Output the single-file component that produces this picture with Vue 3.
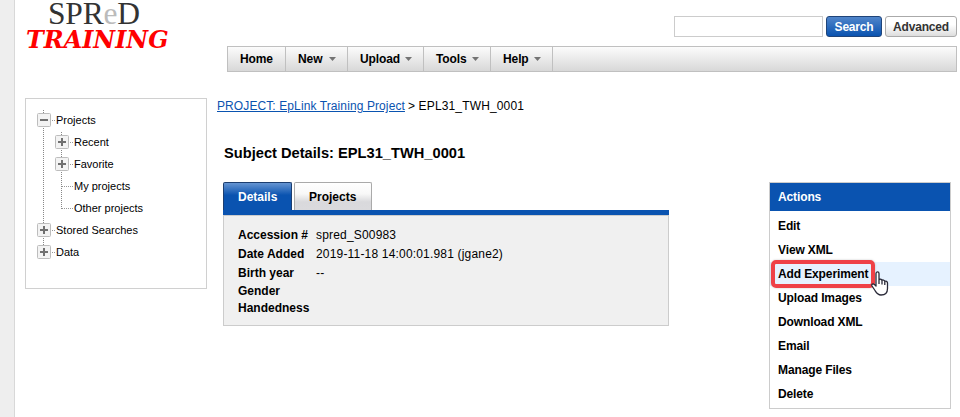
<script setup>
const menus = [
  { label: 'Home', w: 58 },
  { label: 'New', drop: true, w: 62 },
  { label: 'Upload', drop: true, w: 76 },
  { label: 'Tools', drop: true, w: 67 },
  { label: 'Help', drop: true, w: 62 },
]
const tree = [
  {
    label: 'Projects',
    open: true,
    children: [
      { label: 'Recent', expandable: true },
      { label: 'Favorite', expandable: true },
      { label: 'My projects' },
      { label: 'Other projects' },
    ],
  },
  { label: 'Stored Searches' },
  { label: 'Data' },
]
const details = [
  { label: 'Accession #', value: 'spred_S00983', h: 19 },
  { label: 'Date Added', value: '2019-11-18 14:00:01.981 (jgane2)', h: 19 },
  { label: 'Birth year', value: '--', h: 19 },
  { label: 'Gender', value: '', h: 17 },
  { label: 'Handedness', value: '', h: 17 },
]
const actions = ['Edit', 'View XML', 'Add Experiment', 'Upload Images', 'Download XML', 'Email', 'Manage Files', 'Delete']
</script>

<template>
  <div class="page">
    <div class="gutter"></div>
    <div class="main">
      <header class="header">
        <div class="logo">
          <div class="brand">SPR<span class="faint">e</span>D</div>
          <div class="training">TRAINING</div>
        </div>
        <div class="top">
          <div class="search">
            <input class="field" type="text" aria-label="Search" />
            <button class="btn primary">Search</button>
            <button class="btn">Advanced</button>
          </div>
          <nav class="nav">
            <div v-for="m in menus" :key="m.label" class="menu" :style="{ width: m.w + 'px' }">
              <span>{{ m.label }}</span>
              <svg v-if="m.drop" class="arrow" width="7" height="4" viewBox="0 0 7 4"><path d="M0 0H7L3.5 4Z" fill="#737373" /></svg>
            </div>
          </nav>
        </div>
      </header>
      <div class="body">
        <aside class="sidebar">
          <ul class="tree">
            <li v-for="n in tree" :key="n.label" class="node root">
              <div class="row">
                <svg class="toggle" width="14" height="14" viewBox="0 0 14 14">
                  <rect x=".5" y=".5" width="13" height="13" rx="1" fill="#f3f3f3" stroke="#bdbdbd" />
                  <path :d="n.open ? 'M3 7H11' : 'M3 7H11M7 3V11'" stroke="#707070" stroke-width="2" />
                </svg>
                <span class="link"></span>
                <span>{{ n.label }}</span>
              </div>
              <ul v-if="n.children" class="sub">
                <li v-for="c in n.children" :key="c.label" class="node">
                  <div class="row">
                    <template v-if="c.expandable">
                      <svg class="toggle" width="14" height="14" viewBox="0 0 14 14">
                        <rect x=".5" y=".5" width="13" height="13" rx="1" fill="#f3f3f3" stroke="#bdbdbd" />
                        <path d="M3 7H11M7 3V11" stroke="#707070" stroke-width="2" />
                      </svg>
                      <span class="link"></span>
                    </template>
                    <span v-else class="link long"></span>
                    <span>{{ c.label }}</span>
                  </div>
                </li>
              </ul>
            </li>
          </ul>
        </aside>
        <section class="content">
          <div class="crumbs"><a>PROJECT: EpLink Training Project</a><span class="here">&gt; EPL31_TWH_0001</span></div>
          <h1 class="title"><span>Subject Details: EPL31_TWH_0001</span></h1>
          <div class="tabs">
            <div class="tab active">Details</div>
            <div class="tab">Projects</div>
          </div>
          <div class="panel">
            <div class="details">
              <div v-for="d in details" :key="d.label" class="detail" :style="{ height: d.h + 'px' }">
                <b>{{ d.label }}</b><span>{{ d.value }}</span>
              </div>
            </div>
          </div>
        </section>
        <aside class="actions">
          <div class="ahead">Actions</div>
          <div class="alist">
            <div v-for="a in actions" :key="a" class="action" :class="{ hover: a === 'Add Experiment' }">
              {{ a }}
              <template v-if="a === 'Add Experiment'">
                <span class="mark"></span>
                <svg class="cursor" width="18" height="26" viewBox="0 0 18 26">
                  <path d="M5 15V2.6C5 .4 8 .4 8 2.6V9C8.4 7.8 10.7 8 11 9.5C11.4 8.6 13.6 8.9 13.8 10.4C14.8 9.7 16.5 10.3 16.5 12V17.5C16.5 22 14 24 10 24C6.5 24 5.5 22 4 19.5L1 15C.2 13.3 2 12.2 3.4 13.5ZM8 8.5V13M11 9.5V13.5M13.8 10.3V14" fill="#fff" stroke="#292938" stroke-width="1.3" stroke-linejoin="round" />
                </svg>
              </template>
            </div>
          </div>
        </aside>
      </div>
    </div>
  </div>
</template>

<style>
body { margin: 0; background: #fff; overflow: hidden; }
</style>

<style scoped>
* { box-sizing: border-box; }
.page { display: flex; width: 960px; height: 417px; overflow: hidden; font: 12px/14px "Liberation Sans", Arial, sans-serif; color: #000; }
.gutter { flex: none; width: 15px; background: #eee; border-right: 1px solid #d8d8d8; }
.main { flex: 1; min-width: 0; }
.header { display: flex; height: 98px; }
.logo { width: 212px; flex: none; }
.brand { padding-left: 33px; height: 28px; font: 31.5px/27px "Liberation Serif", serif; letter-spacing: -.2px; color: #333; white-space: nowrap; }
.faint { color: #bbb; }
.training { padding-left: 11px; height: 24px; font: italic bold 23.9px/24px "DejaVu Serif", serif; color: #f00; white-space: nowrap; }
.top { width: 730px; padding-top: 16px; }
.search { display: flex; justify-content: flex-end; height: 21px; }
.field { width: 149px; height: 21px; padding: 0 4px; border: 1px solid #ccc; outline: 0; margin-right: 3px; }
.btn { height: 21px; width: 72px; padding: 2px 0 0; border: 1px solid #aaa; border-radius: 3px; background: linear-gradient(#fff, #fff 40%, #ddd); font: bold 12px/17px "Liberation Sans", Arial, sans-serif; letter-spacing: -.2px; color: #333; }
.primary { width: 56px; margin-right: 3px; border-color: #1f4479; background: linear-gradient(#5085ca, #0a53b0); color: #fff; }
.nav { display: flex; margin-top: 9px; height: 26px; border: 1px solid #c0c0c0; background: linear-gradient(#fcfcfc, #d8d8d8); }
.menu { display: flex; align-items: center; padding-left: 12px; border-right: 1px solid #c0c0c0; font-weight: bold; letter-spacing: -.1px; }
.arrow { margin: 0 11px 0 auto; }
.body { display: flex; }
.sidebar { flex: none; margin-left: 10px; width: 182px; height: 191px; border: 1px solid #d0d0d0; padding: 11px 0 0 11px; font-size: 11px; }
ul { list-style: none; margin: 0; padding: 0; }
.node { position: relative; }
.row { display: flex; align-items: center; height: 22px; position: relative; top: -1px; }
.toggle { flex: none; }
.link { flex: none; width: 5px; height: 1px; background: repeating-linear-gradient(90deg, transparent 0 1px, #999 1px 2px); }
.link.long { width: 12px; margin-left: 6px; margin-right: 1px; }
.sub { padding-left: 18px; }
.node::before { content: ""; position: absolute; left: 6px; top: 0; bottom: 0; width: 1px; background: repeating-linear-gradient(#888 0 1px, transparent 1px 2px); }
.node:last-child::before { bottom: auto; height: 11px; }
.content { flex: none; width: 462px; }
.crumbs { display: flex; padding: 1px 0 0 10px; height: 46px; white-space: nowrap; letter-spacing: .1px; }
.crumbs a { color: #0a53b0; text-decoration: underline; }
.here { margin-left: 3px; letter-spacing: .15px; }
.title { margin: 0; padding-left: 17px; height: 38px; font-size: 14.67px; line-height: 18px; }
.tabs { display: flex; gap: 2px; margin-left: 16px; height: 28px; }
.tab { width: 78px; height: 28px; border: 1px solid #aaa; border-bottom: 0; border-radius: 2px 2px 0 0; padding: 1px 0 0 14px; font-weight: bold; line-height: 27px; background: linear-gradient(#fff, #f8f8f8 40%, #d9d9dc 70%, #dadadd); }
.tab.active { width: 69px; color: #fff; border-color: #1c3e70; background: linear-gradient(#6695d2, #0a53b0 45%); }
.panel { margin-left: 16px; width: 446px; height: 116px; border-top: 5px solid #0a53b0; }
.details { height: 111px; border: 1px solid #ccc; background: #f0f0f0; padding: 9px 0 0 14px; }
.detail { display: flex; align-items: center; white-space: nowrap; }
.detail b { width: 78px; }
.detail span { letter-spacing: .18px; }
.actions { flex: none; margin: 84px 0 0 100px; width: 182px; height: 227px; border: 1px solid #ccc; font-weight: bold; letter-spacing: -.12px; }
.ahead { height: 28px; padding-left: 8px; background: #0a53b0; color: #fff; line-height: 28px; }
.alist { padding-top: 3px; }
.action { position: relative; height: 24px; padding-left: 8px; line-height: 24px; }
.hover { background: #e6f2ff; }
.mark { position: absolute; left: 1px; top: -2px; width: 104px; height: 28px; border: 4px solid #ef4147; border-radius: 5px; box-shadow: 0 0 2px #8888; }
.cursor { position: absolute; left: 101px; top: 9px; }
</style>
